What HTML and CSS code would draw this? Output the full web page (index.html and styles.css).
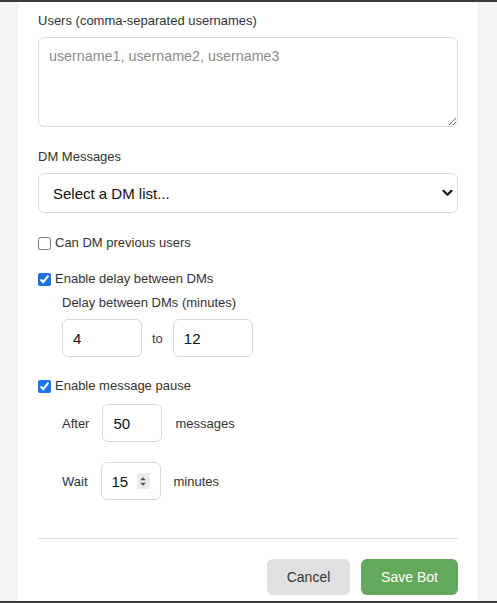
FILE: index.html
```html
<!DOCTYPE html>
<html>
<head>
<meta charset="utf-8">
<link rel="stylesheet" href="styles.css">
</head>
<body>
<div class="frame">
  <div class="panel">
    <div class="group">
      <label class="label">Users (comma-separated usernames)</label>
      <textarea class="textarea" placeholder="username1, username2, username3"></textarea>
    </div>
    <div class="group">
      <label class="label">DM Messages</label>
      <div class="select">
        <span>Select a DM list...</span>
        <svg class="chev" width="11" height="8" viewBox="0 0 11 8"><path d="M1.5 1.8 L5.5 5.8 L9.5 1.8" fill="none" stroke="#111" stroke-width="2.2" stroke-linecap="round" stroke-linejoin="round"/></svg>
      </div>
    </div>
    <label class="check"><input type="checkbox"> Can DM previous users</label>
    <label class="check"><input type="checkbox" checked> Enable delay between DMs</label>
    <div class="sub">
      <div class="sublabel">Delay between DMs (minutes)</div>
      <div class="range">
        <input class="input w80" type="text" value="4">
        <span class="muted">to</span>
        <input class="input w80" type="text" value="12">
      </div>
    </div>
    <label class="check pause"><input type="checkbox" checked> Enable message pause</label>
    <div class="sub rows">
      <div class="row">
        <span>After</span>
        <input class="input w60" type="text" value="50">
        <span>messages</span>
      </div>
      <div class="row">
        <span>Wait</span>
        <div class="input w60 spin">
          <span class="val">15</span>
          <span class="spinner"><svg width="8" height="11" viewBox="0 0 8 11"><path d="M1 4.2 L4 1.2 L7 4.2 Z M1 6.8 L4 9.8 L7 6.8 Z" fill="#555"/></svg></span>
        </div>
        <span>minutes</span>
      </div>
    </div>
    <hr class="divider">
    <div class="actions">
      <button class="btn cancel">Cancel</button>
      <button class="btn save">Save Bot</button>
    </div>
  </div>
</div>
</body>
</html>
```

FILE: styles.css
```css
* { box-sizing: border-box; }
html, body { margin: 0; padding: 0; }
body {
  background: #f4f4f4;
  font-family: "Liberation Sans", Arial, sans-serif;
  color: #333;
  width: 497px;
  height: 603px;
  overflow: hidden;
}
.frame {
  height: 603px;
  border-top: 2px solid #3a3a3a;
  border-bottom: 2px solid #3a3a3a;
  display: flex;
}
.panel {
  width: 460px;
  margin-left: 18px;
  background: #fff;
  padding: 11px 20px 0 20px;
  box-shadow: 1px 0 0 #ebebeb;
}
.group { margin-bottom: 22px; }
.label {
  display: block;
  font-size: 13px;
  line-height: 16px;
  margin-bottom: 8px;
  color: #333;
}
.textarea {
  display: block;
  width: 420px;
  height: 90px;
  border: 1px solid #d9d9d9;
  border-radius: 6px;
  padding: 10px 10px;
  font-family: "Liberation Sans", Arial, sans-serif;
  font-size: 14.3px;
  resize: vertical;
  outline: none;
}
.textarea::placeholder { color: #8c8c8c; }
.select {
  height: 40px;
  border: 1px solid #d9d9d9;
  border-radius: 6px;
  display: flex;
  align-items: center;
  justify-content: space-between;
  padding: 0 3px 0 14px;
  font-size: 15px;
  color: #111;
}
.chev { margin-right: 1px; }
.check {
  display: flex;
  align-items: center;
  font-size: 13px;
  line-height: 16px;
  margin-bottom: 20px;
  color: #333;
}
.check input {
  width: 13px;
  height: 13px;
  margin: 0 4px 0 0;
  accent-color: #1a73e8;
}
.check.pause { margin-top: 21px; margin-bottom: 10px; }
.sub { padding-left: 24px; margin-top: -12px; }
.sub.rows { margin-top: 0; display: flex; flex-direction: column; gap: 20px; }
.sublabel {
  font-size: 13px;
  line-height: 16px;
  margin-bottom: 8px;
}
.range { display: flex; align-items: center; gap: 10px; font-size: 13px; }
.muted { color: #444; }
.input {
  height: 38px;
  border: 1px solid #d9d9d9;
  border-radius: 6px;
  padding: 0 10px;
  font-family: "Liberation Sans", Arial, sans-serif;
  font-size: 15px;
  color: #111;
  outline: none;
}
.w80 { width: 80px; }
.w60 { width: 60px; }
.row { display: flex; align-items: center; gap: 13px; font-size: 13px; color: #333; }
.spin { display: flex; align-items: center; justify-content: space-between; padding: 0 10px 0 10px; }
.spin .val { font-size: 15px; color: #111; }
.spinner {
  width: 13px;
  height: 16px;
  background: #ececec;
  display: flex;
  align-items: center;
  justify-content: center;
}
.divider {
  border: 0;
  border-top: 1px solid #dedede;
  margin: 38px 0 20px 0;
}
.actions { display: flex; justify-content: flex-end; gap: 11px; }
.btn {
  height: 36px;
  border: 0;
  border-radius: 6px;
  font-family: "Liberation Sans", Arial, sans-serif;
  font-size: 14px;
}
.cancel { width: 83px; background: #e0e0e0; color: #333; }
.save { width: 97px; background: #63a95c; color: #fff; }
```
